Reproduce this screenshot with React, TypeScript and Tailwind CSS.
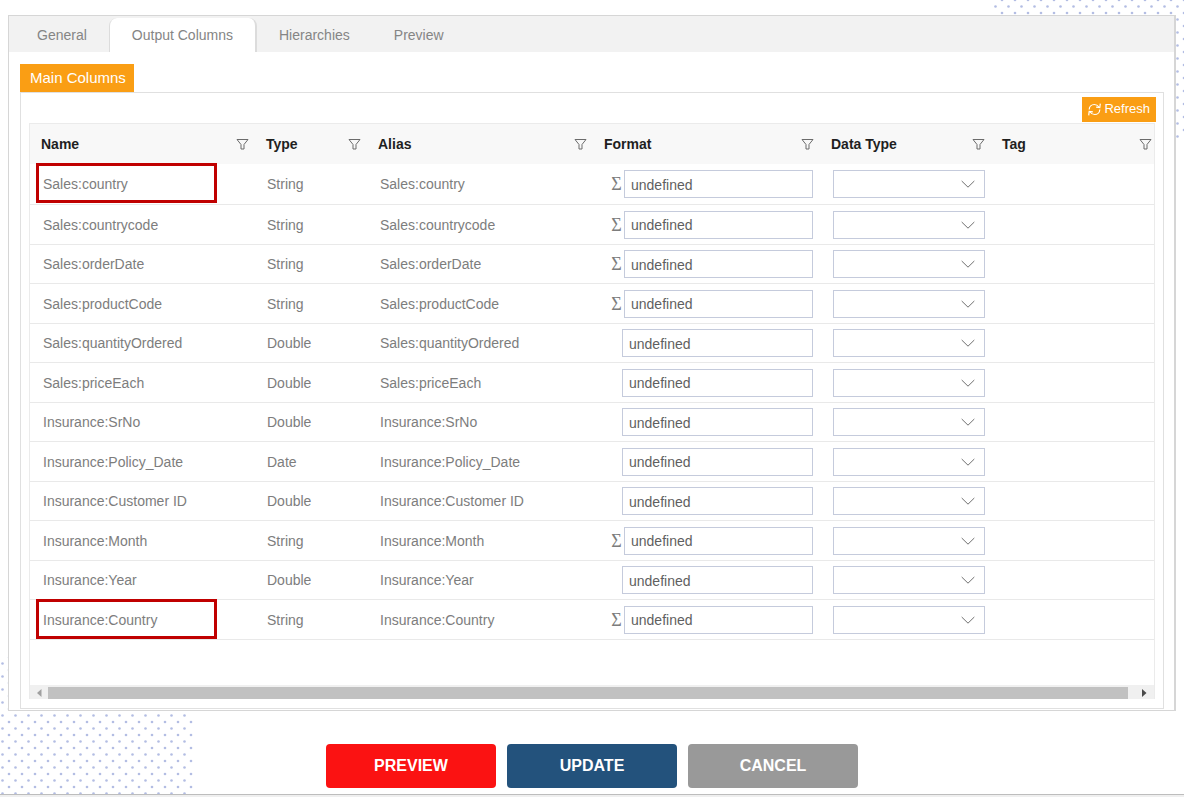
import { useState } from "react";

interface Column {
  name: string;
  type: string;
  // string columns can be aggregated, so they get the sigma button
  sigma?: boolean;
  marked?: boolean;
}

const TABS = ["General", "Output Columns", "Hierarchies", "Preview"];

const HEADERS = ["Name", "Type", "Alias", "Format", "Data Type", "Tag"];

const COLUMNS: Column[] = [
  { name: "Sales:country", type: "String", sigma: true, marked: true },
  { name: "Sales:countrycode", type: "String", sigma: true },
  { name: "Sales:orderDate", type: "String", sigma: true },
  { name: "Sales:productCode", type: "String", sigma: true },
  { name: "Sales:quantityOrdered", type: "Double" },
  { name: "Sales:priceEach", type: "Double" },
  { name: "Insurance:SrNo", type: "Double" },
  { name: "Insurance:Policy_Date", type: "Date" },
  { name: "Insurance:Customer ID", type: "Double" },
  { name: "Insurance:Month", type: "String", sigma: true },
  { name: "Insurance:Year", type: "Double" },
  { name: "Insurance:Country", type: "String", sigma: true, marked: true },
];

function FilterIcon() {
  return (
    <svg width="13" height="12" viewBox="0 0 13 12" fill="none" stroke="#6b6b6b" strokeWidth="1">
      <path d="M1 1.5h11L8 6.5v4.5H5V6.5z" strokeLinejoin="round" />
    </svg>
  );
}

function RefreshIcon() {
  return (
    <svg width="13" height="13" viewBox="0 0 13 13" fill="none" stroke="#fff" strokeWidth="1.2">
      <path d="M1.2 6.6C1.3 3.6 3.5 1.5 6.3 1.5c1.9 0 3.5.9 4.6 2.5" />
      <path d="M12.3.6l-.5 3.9-3.7-.3" />
      <path d="M11.8 6.4c-.1 3-2.3 5.1-5.1 5.1-1.9 0-3.5-.9-4.6-2.5" />
      <path d="M.7 12.4l.5-3.9 3.7.3" />
    </svg>
  );
}

function Dots({ id, className }: { id: string; className: string }) {
  return (
    <svg className={className} aria-hidden="true">
      <defs>
        <pattern id={id} width="13" height="13" patternUnits="userSpaceOnUse">
          <circle cx="2.5" cy="6.5" r="1.3" fill="#b3bde3" />
          <circle cx="9" cy="13" r="1.3" fill="#b3bde3" />
          <circle cx="9" cy="0" r="1.3" fill="#b3bde3" />
        </pattern>
      </defs>
      <rect width="100%" height="100%" fill={`url(#${id})`} />
    </svg>
  );
}

function ColumnRow({ column }: { column: Column }) {
  const { name, type, sigma, marked } = column;

  return (
    <tr className="h-10 first:h-[41px] not-first:odd:h-[39px]">
      <td className="relative border-b border-[#e9e9e9] pl-[13px]">
        {name}
        {marked && (
          <span className="absolute -top-px left-1.5 h-10 w-[181px] border-3 border-[#c00000]" />
        )}
      </td>
      <td className="border-b border-[#e9e9e9] pl-3">{type}</td>
      <td className="border-b border-[#e9e9e9] pl-[13px]">{name}</td>
      <td className="border-b border-[#e9e9e9] pr-[7px]">
        <div className={sigma ? "flex items-center gap-0.5 pl-[18px]" : "flex items-center pl-[29px]"}>
          {sigma && (
            <button
              type="button"
              aria-label={`Aggregate ${name}`}
              className="w-[11px] shrink-0 font-['Liberation_Serif',serif] text-lg leading-none"
            >
              Σ
            </button>
          )}
          <input
            aria-label={`Format of ${name}`}
            defaultValue="undefined"
            className="h-7 w-full min-w-0 border border-[#c5cbdc] bg-white px-1.5 pt-px text-[#5f5f5f] outline-none"
          />
        </div>
      </td>
      <td className="border-b border-[#e9e9e9] pr-1.5 pl-[13px]">
        <div className="relative">
          <select
            aria-label={`Data type of ${name}`}
            defaultValue=""
            className="block h-7 w-full appearance-none border border-[#c5cbdc] bg-white pr-7 pl-1.5 outline-none"
          >
            <option value=""></option>
            <option>String</option>
            <option>Double</option>
            <option>Date</option>
          </select>
          <svg
            className="pointer-events-none absolute top-2.5 right-2.5"
            width="14"
            height="8"
            viewBox="0 0 14 8"
            fill="none"
            stroke="#6f6f6f"
          >
            <path d="M.7 1 7 7.2 13.3 1" />
          </svg>
        </div>
      </td>
      <td className="border-b border-[#e9e9e9]"></td>
    </tr>
  );
}

export default function App() {
  const [activeTab, setActiveTab] = useState("Output Columns");

  return (
    <div className="relative isolate min-h-screen overflow-hidden bg-white font-['Liberation_Sans',Arial,sans-serif] text-sm text-[#7d7d7d]">
      <Dots id="dots-top" className="absolute top-0 right-0 -z-10 h-[138px] w-[191px]" />
      <Dots id="dots-bottom" className="absolute bottom-0 left-0 -z-10 h-[140px] w-[195px]" />

      <main className="px-2 pt-[15px]">
        <section className="border border-r-2 border-[#d6d6d6] bg-white pb-px">
          <nav className="flex h-9 items-end bg-[#f2f2f2] pl-1.5 text-[#858585]">
            {TABS.map((tab) => (
              <button
                key={tab}
                type="button"
                onClick={() => setActiveTab(tab)}
                className={
                  tab === activeTab
                    ? "h-[34px] rounded-t-lg border-r-2 border-l border-[#dcdcdc] bg-white px-[22px]"
                    : "h-[34px] px-[22px]"
                }
              >
                {tab}
              </button>
            ))}
          </nav>

          <div className="pt-3 pr-2.5 pl-[11px]">
            <h2 className="flex h-7 w-fit items-center bg-[#fa9e14] pr-2 pl-2.5 text-[15px] text-white">
              Main Columns
            </h2>
            <div className="border border-[#e0e0e0] px-2 pb-[9px]">
              <div className="flex justify-end pt-1 pb-px">
                <button
                  type="button"
                  className="-mr-px flex h-[25px] items-center gap-[3px] bg-[#fa9e14] px-1.5 text-[13px] text-white"
                >
                  <RefreshIcon />
                  Refresh
                </button>
              </div>

              <div className="border-x border-t border-[#ebebeb]">
                <table className="w-full table-fixed border-separate border-spacing-0 text-left">
                  <colgroup>
                    <col className="w-[225px]" />
                    <col className="w-[112px]" />
                    <col className="w-[226px]" />
                    <col className="w-[227px]" />
                    <col className="w-[171px]" />
                    <col className="w-[163px]" />
                  </colgroup>
                  <thead>
                    <tr className="h-10 bg-[#f8f8f8]">
                      {HEADERS.map((header) => (
                        <th key={header} className="pr-1.5 pl-[11px] font-bold text-[#1f1f1f] last:pr-0.5">
                          <div className="flex items-center justify-between">
                            {header}
                            <button type="button" aria-label={`Filter ${header}`}>
                              <FilterIcon />
                            </button>
                          </div>
                        </th>
                      ))}
                    </tr>
                  </thead>
                  <tbody>
                    {COLUMNS.map((column) => (
                      <ColumnRow key={column.name} column={column} />
                    ))}
                  </tbody>
                </table>

                <div className="mt-[45px] flex h-3.5 items-center gap-1 bg-[#f0f0f0] pt-0.5">
                  <svg className="ml-1.5 shrink-0" width="8" height="8" viewBox="0 0 8 8" fill="#a0a0a0">
                    <path d="M5.5 0v8L1 4z" />
                  </svg>
                  <div className="h-3 flex-1 bg-[#c1c1c1]" />
                  <svg className="mr-1.5 ml-2 shrink-0" width="8" height="8" viewBox="0 0 8 8" fill="#4a4a4a">
                    <path d="M2 0v8l4.5-4z" />
                  </svg>
                </div>
              </div>
            </div>
          </div>
        </section>

        <div className="mt-[33px] mb-1.5 flex justify-center gap-[11px] text-base font-bold text-white">
          <button type="button" className="h-11 w-[170px] rounded-sm bg-[#fb1212]">
            PREVIEW
          </button>
          <button type="button" className="h-11 w-[170px] rounded-sm bg-[#23527c]">
            UPDATE
          </button>
          <button type="button" className="h-11 w-[170px] rounded-sm bg-[#999999]">
            CANCEL
          </button>
        </div>
      </main>
      <footer className="h-[3px] border-t border-[#bdbdbd] bg-[#efefef]" />
    </div>
  );
}
